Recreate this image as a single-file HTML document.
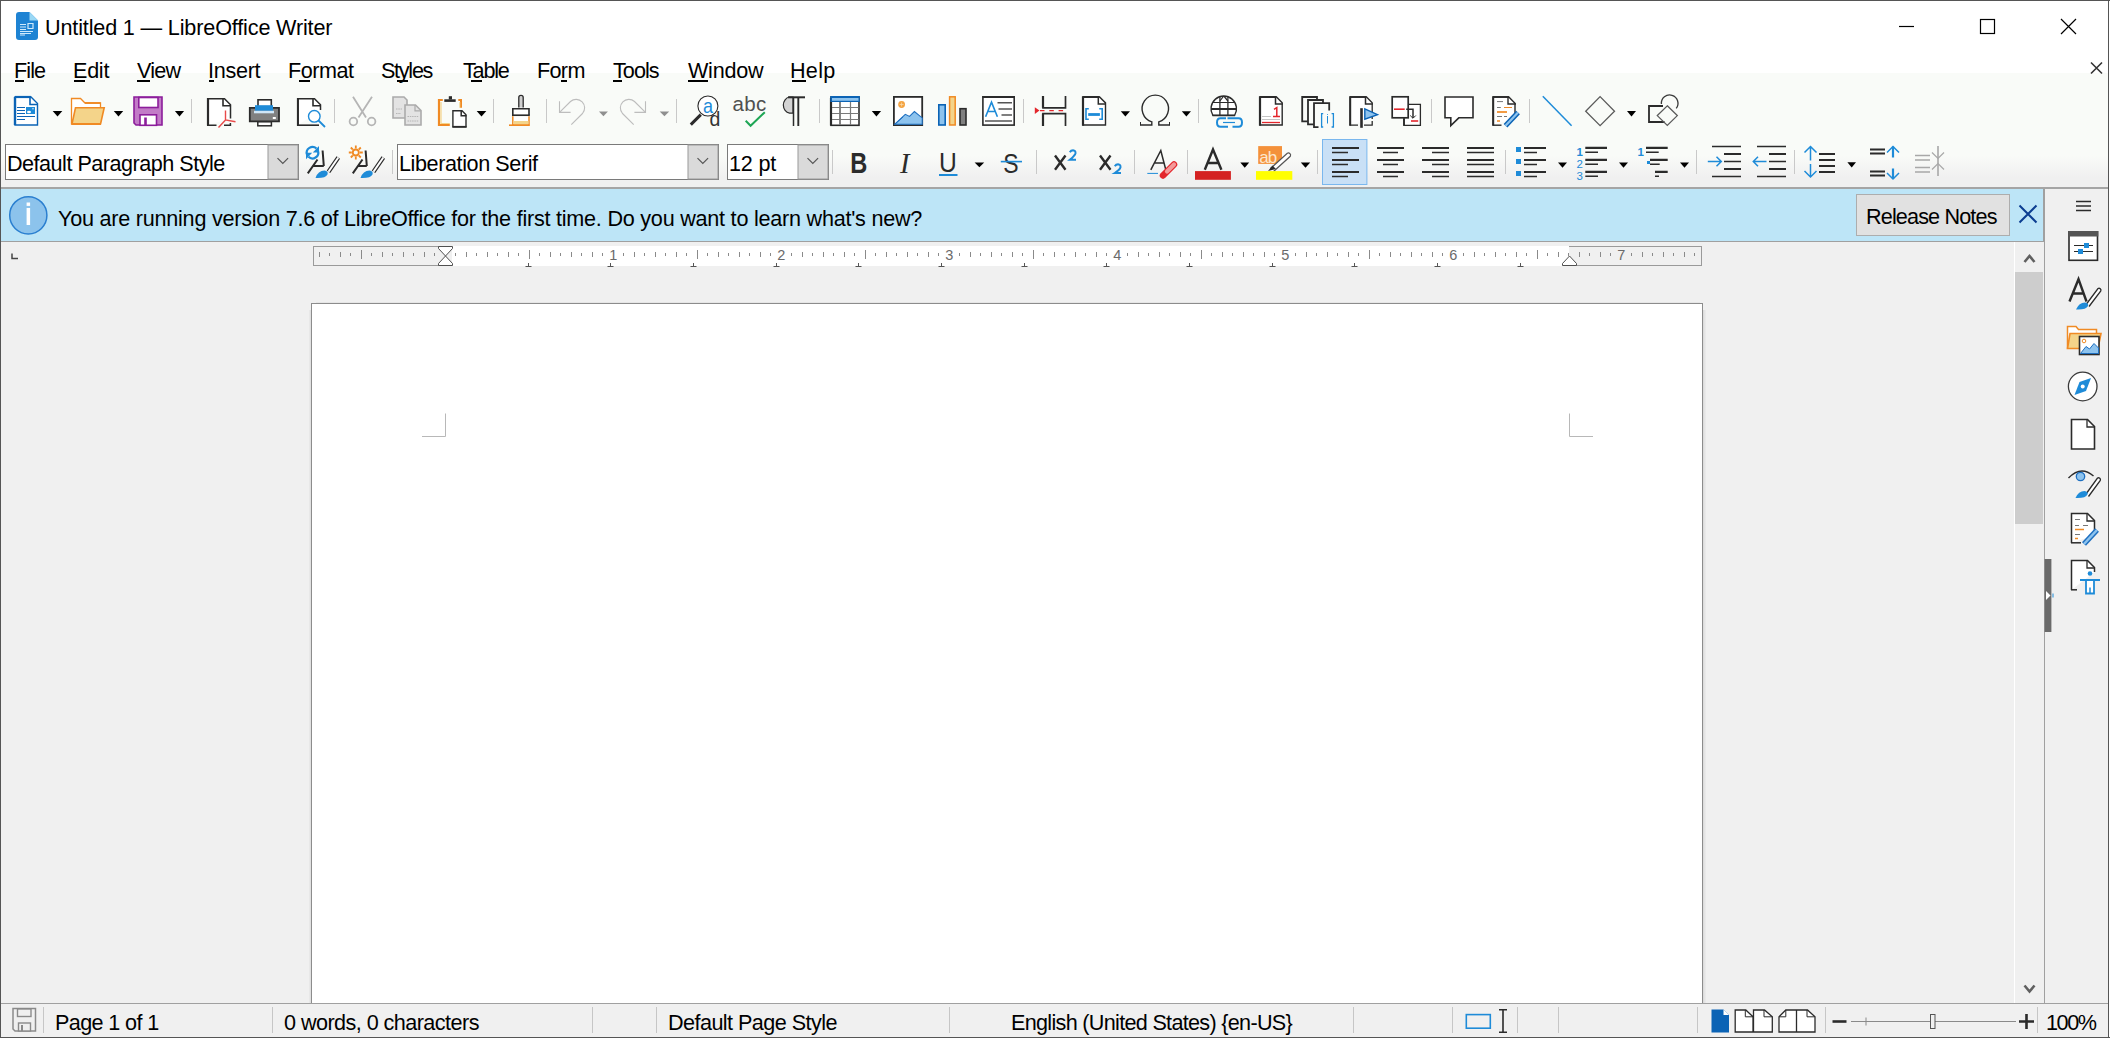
<!DOCTYPE html>
<html><head><meta charset="utf-8">
<style>
html,body{margin:0;padding:0;width:2110px;height:1038px;overflow:hidden;background:#fff}
#root{position:relative;width:2110px;height:1038px;overflow:hidden;font-family:"Liberation Sans",sans-serif;color:#000}
.a{position:absolute}
.t{position:absolute;white-space:nowrap;font-size:21.6px;line-height:1;font-family:"Liberation Sans",sans-serif;color:#000}
.u{text-decoration:underline;text-decoration-thickness:2px;text-underline-offset:3px}
.sep{position:absolute;width:1px;background:#c8c8c8}
svg{position:absolute;overflow:visible}
</style></head><body><div id="root">
<!-- window frame -->
<div class="a" style="left:0;top:0;width:2110px;height:1038px;background:#fff"></div>
<!-- toolbar bg -->
<div class="a" style="left:1px;top:73px;width:2108px;height:114px;background:linear-gradient(#f9fbf8 0,#f9fbf8 83px,#f0f0f0 105px,#f0f0f0 114px)"></div>
<div class="a" style="left:1px;top:187px;width:2108px;height:2px;background:#a5a5a5"></div>
<!-- infobar -->
<div class="a" style="left:1px;top:189px;width:2042px;height:52px;background:#bde5f7"></div>
<div class="a" style="left:2043px;top:189px;width:1px;height:53px;background:#a0a0a0"></div>
<div class="a" style="left:1px;top:241px;width:2043px;height:1px;background:#a0a0a0"></div>
<!-- workspace -->
<div class="a" style="left:1px;top:242px;width:2013px;height:761px;background:#f0f0f0"></div>
<!-- sidebar -->
<div class="a" style="left:2044px;top:189px;width:1px;height:814px;background:#a0a0a0"></div>
<div class="a" style="left:2045px;top:189px;width:64px;height:814px;background:#f0f0f0"></div>
<!-- scrollbar -->
<div class="a" style="left:2014px;top:242px;width:1px;height:761px;background:#fff"></div>
<div class="a" style="left:2015px;top:242px;width:29px;height:761px;background:#f0f0f0"></div>
<div class="a" style="left:2015px;top:272px;width:28px;height:252px;background:#cdcdcd"></div>
<!-- statusbar -->
<div class="a" style="left:1px;top:1003px;width:2108px;height:1px;background:#a0a0a0"></div>
<div class="a" style="left:1px;top:1004px;width:2108px;height:33px;background:#f0f0f0"></div>
<!-- page shadow -->
<div class="a" style="left:309px;top:310px;width:2px;height:693px;background:linear-gradient(90deg,#ececec,#dcdcdc)"></div>
<div class="a" style="left:1703px;top:310px;width:3px;height:693px;background:linear-gradient(90deg,#d8d8d8,#e4e4e4,#ececec)"></div>
<div class="a" style="left:316px;top:302px;width:1384px;height:1px;background:#e6e6e6"></div>
<!-- page -->
<div class="a" style="left:311px;top:303px;width:1390px;height:699px;background:#fff;border-left:1px solid #8c8c8c;border-top:1px solid #8c8c8c;border-right:1px solid #8c8c8c"></div>
<!-- borders -->
<div class="a" style="left:0;top:0;width:2110px;height:1px;background:#555"></div>
<div class="a" style="left:0;top:0;width:1px;height:1038px;background:#555"></div>
<div class="a" style="left:2108px;top:0;width:1px;height:1038px;background:#555"></div>
<div class="a" style="left:0;top:1037px;width:2110px;height:1px;background:#555"></div>

<!-- title -->
<div class="t" style="left:45px;top:17px;letter-spacing:-0.15px">Untitled 1 — LibreOffice Writer</div>
<!-- menu -->
<div class="t" style="left:14px;top:60px;letter-spacing:-0.93px">File</div>
<div class="t" style="left:73px;top:60px;letter-spacing:-0.27px">Edit</div>
<div class="t" style="left:137px;top:60px;letter-spacing:-0.77px">View</div>
<div class="t" style="left:208px;top:60px;letter-spacing:-0.28px">Insert</div>
<div class="t" style="left:288px;top:60px;letter-spacing:-0.48px">Format</div>
<div class="t" style="left:381px;top:60px;letter-spacing:-1.28px">Styles</div>
<div class="t" style="left:463px;top:60px;letter-spacing:-1.2px">Table</div>
<div class="t" style="left:537px;top:60px;letter-spacing:-0.67px">Form</div>
<div class="t" style="left:613px;top:60px;letter-spacing:-0.95px">Tools</div>
<div class="t" style="left:688px;top:60px;letter-spacing:-0.26px">Window</div>
<div class="t" style="left:790px;top:60px;letter-spacing:0.27px">Help</div>

<!-- combos -->


<!-- infobar text -->
<div class="t" style="left:58px;top:208px;letter-spacing:-0.234px">You are running version 7.6 of LibreOffice for the first time. Do you want to learn what's new?</div>
<div class="a" style="left:1856px;top:194px;width:152px;height:40px;background:#e1e1e1;border:1px solid #adadad"></div>
<div class="t" style="left:1866px;top:206px;letter-spacing:-0.85px">Release Notes</div>

<!-- status -->
<div class="t" style="left:55px;top:1012px;letter-spacing:-0.62px">Page 1 of 1</div>
<div class="t" style="left:284px;top:1012px;letter-spacing:-0.55px">0 words, 0 characters</div>
<div class="t" style="left:668px;top:1012px;letter-spacing:-0.55px">Default Page Style</div>
<div class="t" style="left:1011px;top:1012px;letter-spacing:-0.69px">English (United States) {en-US}</div>
<div class="t" style="left:2046px;top:1012px;letter-spacing:-1.4px">100%</div>


<svg id="ic1" width="2110" height="1038" style="left:0;top:0" viewBox="0 0 2110 1038" fill="none" stroke-linecap="butt">
<!-- app icon -->
<g>
<path d="M19,12 H29.5 L38,20.5 V37 Q38,40 35,40 H19 Q16,40 16,37 V15 Q16,12 19,12 Z" fill="#1e83d3"/>
<path d="M29.5,12 L38,20.5 H29.5 Z" fill="#9ad8f5"/>
<path d="M20,24.5h6M20,27h6M20,29.5h6M20,31.5h13M20,33.5h11M20,35h5" stroke="#cfeafc" stroke-width="1.2"/>
<path d="M28,23.5h5v5h-5z" stroke="#cfeafc" stroke-width="1.2"/>
</g>
<!-- window controls -->
<path d="M1899,26.5h15" stroke="#000" stroke-width="1.2"/>
<rect x="1980.5" y="19.5" width="14" height="14" stroke="#000" stroke-width="1.2"/>
<path d="M2061,19L2076,34M2076,19L2061,34" stroke="#000" stroke-width="1.2"/>
<!-- doc close -->
<path d="M2091,62.5L2102,73.5M2102,62.5L2091,73.5" stroke="#333" stroke-width="1.6"/>

<!-- ===== toolbar 1 ===== -->
<!-- new -->
<path d="M15,125 V97 H31 L37.5,103.5 V125 Z" fill="#fff" stroke="#0b63b5" stroke-width="1.4"/>
<path d="M15,97v28" stroke="#0b63b5" stroke-width="2.4"/>
<path d="M15,97h16" stroke="#0b63b5" stroke-width="2.2"/>
<path d="M30,97 V104.5 H38" stroke="#0b63b5" stroke-width="1.6"/>
<path d="M17,107.5h8M17,110.5h8M17,113.5h8M17,116.5h18M17,119.5h8" stroke="#0b63b5" stroke-width="1.1"/>
<rect x="26" y="107" width="9" height="7" fill="#1e8bd8"/>
<ellipse cx="29" cy="112" rx="2" ry="1.2" fill="#fff"/>
<circle cx="33" cy="108.8" r="0.8" fill="#cfe6f7"/>
<!-- dropdown arrows -->
<g fill="#000">
<path d="M52.7,111h9.6l-4.8,5.4z"/>
<path d="M113.8,111h9.4l-4.7,5.4z"/>
<path d="M174.9,111h9.2l-4.6,5.4z"/>
<path d="M476.7,111h9.6l-4.8,5.4z"/>
<path d="M871.8,111h9.3l-4.65,5.4z"/>
<path d="M1120.8,111.3h9.2l-4.6,5.2z"/>
<path d="M1181.8,111.3h9.2l-4.6,5.2z"/>
<path d="M1627,111.1h9l-4.5,5.4z"/>
</g>
<g fill="#8f8f8f">
<path d="M599,111.4h8.9l-4.45,4.9z"/>
<path d="M659.7,111.4h9.5l-4.75,4.9z"/>
</g>
<!-- open folder -->
<path d="M71.5,124.5 V98.5 H80.5 L85,103 H100.5 V107.5" stroke="#f08a24" stroke-width="1.3" fill="#fff"/>
<path d="M85,103h15.5" stroke="#f08a24" stroke-width="1.8"/>
<path d="M75.5,107.8 H104.2 L100.6,123.8 H72 Z" fill="#f4d48a" stroke="#f08a24" stroke-width="1.6"/>
<path d="M71.5,124h29.5" stroke="#f08a24" stroke-width="2"/>
<!-- save -->
<path d="M134,97 H162 V125 H136 L134,123 Z" fill="#c27bc7" stroke="#8c1d9b" stroke-width="1.6"/>
<rect x="138.8" y="97.5" width="19.2" height="10" fill="#fff" stroke="#8c1d9b" stroke-width="1.6"/>
<rect x="140" y="114.8" width="16.5" height="10.5" fill="#fff" stroke="#8c1d9b" stroke-width="1.6"/>
<path d="M145.5,117.5v8" stroke="#8c1d9b" stroke-width="2.6"/>
<!-- separators -->
<g stroke="#c9c9c9" stroke-width="1">
<path d="M191.5,99v24M334.5,99v24M493.5,99v24M546.5,99v24M676.5,99v24M819.5,99v24M1023.5,99v24M1198.5,99v24M1431.5,99v24M1529.5,99v24"/>
</g>
<!-- export pdf -->
<path d="M208,125 V98.8 H224.5 L230.5,104.8 V118.5" stroke="#2b2b2b" stroke-width="1.5" fill="#fff"/>
<path d="M208,98v27.5" stroke="#2b2b2b" stroke-width="2.2"/>
<path d="M223,98.5 V105.8 H231" stroke="#2b2b2b" stroke-width="1.6"/>
<path d="M207,125.2h9.5M224,125.2h7.2M230.4,123v2.8" stroke="#2b2b2b" stroke-width="1.5"/>
<path d="M225.5,110.5 V120 L235.5,121.8 M225.5,120 L218.5,127.5" stroke="#e84a4a" stroke-width="1.4"/>
<!-- print -->
<rect x="258" y="99.8" width="13.3" height="8.5" fill="#fff" stroke="#2b2b2b" stroke-width="1.6"/>
<path d="M249.8,107.8 H279 V121.4 H249.8 Z" fill="#808080" stroke="#2b2b2b" stroke-width="1.8"/>
<rect x="255" y="105.2" width="18" height="5.6" fill="#1e8bd8"/>
<rect x="254" y="110.8" width="20" height="2.5" fill="#cfe6f7"/>
<rect x="272.8" y="117" width="3" height="2" fill="#fff"/>
<rect x="257.8" y="121.8" width="13.6" height="4" fill="#fff" stroke="#2b2b2b" stroke-width="1.5"/>
<!-- print preview -->
<path d="M298,125.2 V98.8 H314.5 L320.5,104.8 V110" stroke="#2b2b2b" stroke-width="1.5" fill="#fff"/>
<path d="M297.9,98v27.8" stroke="#2b2b2b" stroke-width="2"/>
<path d="M313,98.5 V105.8 H321" stroke="#2b2b2b" stroke-width="1.6"/>
<path d="M297,125.2h22" stroke="#2b2b2b" stroke-width="1.6"/>
<circle cx="314.3" cy="116.3" r="5.8" fill="#fff" stroke="#1e8bd8" stroke-width="1.4"/>
<path d="M318.5,120.5L325,127" stroke="#1e8bd8" stroke-width="1.8"/>
<!-- cut (disabled) -->
<g stroke="#b5b5b5" stroke-width="1.8">
<path d="M353,96.8L366,117.6M372,96.8L358.5,117.6"/>
<circle cx="353.4" cy="121.5" r="3.8"/>
<circle cx="371.6" cy="121.5" r="3.8"/>
</g>
<!-- copy (disabled) -->
<path d="M393,118 V97 H404 L407,100 V118 Z" fill="#e3e3e3" stroke="#ababab" stroke-width="1.6"/>
<path d="M405,125 V105 H415.5 L421,110.5 V125 Z" fill="#e3e3e3" stroke="#ababab" stroke-width="1.6"/>
<path d="M415,105 V110.8 H421" stroke="#ababab" stroke-width="1.2"/>
<path d="M396,109h6M396,113.5h5M407.5,116.5h11M407.5,121h11" stroke="#b0b0b0" stroke-width="0.9" stroke-dasharray="1.5 0.8"/>
<!-- paste -->
<path d="M442.8,100 H439 V125 H449.8" stroke="#f08a24" stroke-width="2.2"/>
<path d="M441,102v21.5h8.8" stroke="#f4d48a" stroke-width="1.2"/>
<path d="M458.3,100 H461 V107.8" stroke="#f08a24" stroke-width="2"/>
<path d="M459.8,102v5.8" stroke="#f4d48a" stroke-width="1"/>
<rect x="444.3" y="99.3" width="11.4" height="2.6" fill="#2b2b2b"/>
<rect x="448.8" y="96.2" width="3.2" height="3.3" fill="#2b2b2b"/>
<path d="M452.9,126.9 V110.8 H462 L466,114.8 V126.9 Z" fill="#fff" stroke="#2b2b2b" stroke-width="1.4"/>
<path d="M461.2,110.8 V115.8 H466.5" stroke="#2b2b2b" stroke-width="1.5"/>
<path d="M452.5,126.8h14" stroke="#2b2b2b" stroke-width="1.8"/>
<!-- clone formatting -->
<path d="M518.8,107.4 V97.5 Q518.8,95.4 521,95.4 Q523.2,95.4 523.2,97.5 V107.4" fill="#cfcfcf" stroke="#2b2b2b" stroke-width="1.3"/>
<path d="M512.8,115.4 V108.8 H529 V115.4" fill="#fff" stroke="#2b2b2b" stroke-width="1.6"/>
<rect x="512" y="114.4" width="17.7" height="1.8" fill="#2b2b2b"/>
<path d="M512.8,116.2 V125.1 H529 V116.2" fill="#fff" stroke="#f08a24" stroke-width="1.5"/>
<rect x="513.5" y="121" width="15" height="3.4" fill="#f4d48a"/>
<path d="M509,125.2h20.6" stroke="#f08a24" stroke-width="1.6"/>
<!-- undo / redo (disabled) -->
<g stroke="#bdbdbd" stroke-width="1.1">
<path d="M559.5,101.2V112.4H570.6M560.3,111.6L570.5,101.5A8.5,8.5 0 0 1 582.5,113.5L571.3,124.7"/>
<path d="M645.5,101.2V112.4H634.4M644.7,111.6L634.5,101.5A8.5,8.5 0 0 0 622.5,113.5L633.7,124.7"/>
</g>
<!-- find & replace -->
<circle cx="707.9" cy="106" r="10" fill="#fff" stroke="#2b2b2b" stroke-width="1.1"/>
<path d="M690.8,124.6L700.8,114.6" stroke="#2b2b2b" stroke-width="3"/>
<text x="703" y="113" font-family="Liberation Sans" font-size="20.5" fill="#1e8bd8" transform="translate(703,0) scale(0.88,1) translate(-703,0)">a</text>
<text x="709.4" y="125.8" font-family="Liberation Sans" font-size="20.5" fill="#333" transform="translate(709.4,0) scale(0.95,1) translate(-709.4,0)">d</text>
<!-- spelling -->
<text x="732.5" y="110.6" font-family="Liberation Sans" font-size="20.5" fill="#505050" letter-spacing="0.4">abc</text>
<path d="M745.7,120.8L750.6,125.8L764.8,112.2" stroke="#1ea655" stroke-width="2"/>
<!-- formatting marks -->
<path d="M793,97 H789.5 A7.3,8.2 0 0 0 789.5,113.2 H793 Z" fill="#d3d3d3" stroke="#2b2b2b" stroke-width="1.2"/>
<path d="M788,97.3h17" stroke="#2b2b2b" stroke-width="2"/>
<path d="M793.5,97v29" stroke="#2b2b2b" stroke-width="1.5"/>
<path d="M798.3,97v29" stroke="#2b2b2b" stroke-width="1.9"/>
<!-- table -->
<rect x="831" y="97" width="28" height="28.3" fill="#fff" stroke="#2b2b2b" stroke-width="1.6"/>
<path d="M831,98v27.5" stroke="#2b2b2b" stroke-width="2.2"/>
<rect x="830.3" y="96" width="29.5" height="6" fill="#0b63b5"/>
<rect x="832" y="98" width="26.5" height="2.8" fill="#8dc3ee"/>
<path d="M840,102v23M850.5,102v23M832,107.5h26.5M832,113.5h26.5M832,119.5h26.5" stroke="#7a7a7a" stroke-width="1.2"/>
<path d="M840,102v23" stroke="#7a7a7a" stroke-width="1.6"/>
<!-- image -->
<rect x="893.9" y="96.9" width="28.3" height="28.2" fill="#fff" stroke="#2b2b2b" stroke-width="1.8"/>
<path d="M894.8,124.2 L905.3,114.3 L909.5,116.4 L914.4,111.6 L922.2,117.9 V124.2 Z" fill="#8dc3ee" stroke="#1e6fc0" stroke-width="1.1"/>
<path d="M894.8,124.2 L903,117" stroke="#1e6fc0" stroke-width="1"/>
<circle cx="901.6" cy="104.5" r="3.4" fill="#f4a341"/>
<path d="M899.6,104.5h4M901.6,102.5v4" stroke="#f8d9a8" stroke-width="0.8"/>
<!-- chart -->
<rect x="938.8" y="104.8" width="6.4" height="20.2" fill="#8dc3ee" stroke="#0b63b5" stroke-width="1.6"/>
<rect x="949.6" y="96.8" width="5.6" height="28.2" fill="#f4d48a" stroke="#f08a24" stroke-width="1.5"/>
<rect x="960" y="108.7" width="6" height="16.3" fill="#808080" stroke="#2b2b2b" stroke-width="1.6"/>
<!-- text box -->
<rect x="982.9" y="96.8" width="31.3" height="28.3" fill="#fff" stroke="#2b2b2b" stroke-width="1.6"/>
<path d="M982.5,96.9h32.5" stroke="#2b2b2b" stroke-width="2"/>
<path d="M985.6,116.8L991.5,102.2L997.4,116.8M987.8,111.5h7.4" stroke="#1e8bd8" stroke-width="1.6"/>
<path d="M997.5,102.8h14.5M998.5,109h13.5M1001.5,115h10.5M985,121h27" stroke="#555" stroke-width="1.4"/>
<!-- page break -->
<path d="M1043,96v11.8H1065.5V96M1043,126V113.6H1065.5V126" stroke="#2b2b2b" stroke-width="1.7"/>
<path d="M1043,96v11.8M1043,126V113.6" stroke="#2b2b2b" stroke-width="2.2"/>
<path d="M1040,110.6h26" stroke="#e3262c" stroke-width="1.3" stroke-dasharray="4.5 4.8"/>
<path d="M1034.8,107.2L1039.5,110.6L1034.8,114Z" fill="#e3262c"/>
<!-- field -->
<path d="M1083,125 V97 H1099.6 L1105.5,102.9 V125 Z" fill="#fff" stroke="#2b2b2b" stroke-width="1.4"/>
<path d="M1083,96.3v29.4" stroke="#2b2b2b" stroke-width="2.2"/>
<path d="M1083,97h16.5" stroke="#2b2b2b" stroke-width="2"/>
<path d="M1098.3,97 V104 H1106" stroke="#2b2b2b" stroke-width="1.5"/>
<path d="M1088.8,108.8H1086V119.3H1088.8M1099.2,108.8H1102.2V119.3H1099.2" stroke="#1e8bd8" stroke-width="1.6"/>
<rect x="1088.2" y="113.1" width="11.7" height="2.8" fill="#1e8bd8"/>
<!-- omega -->
<path d="M1140,125H1151.8V121.8A13.2,13.6 0 1 1 1158.8,121.8V125H1170" stroke="#2b2b2b" stroke-width="1.4"/>
<path d="M1140.5,122v3.2M1169.5,122v3.2" stroke="#2b2b2b" stroke-width="1"/>
<!-- hyperlink -->
<clipPath id="globeclip"><path d="M1212.9,115.5 A12.75,12.75 0 1 1 1234.6,115.5 Z"/></clipPath>
<path d="M1212.9,115.5 A12.75,12.75 0 1 1 1234.6,115.5 Z" fill="#fff" stroke="#2b2b2b" stroke-width="1.4"/>
<g clip-path="url(#globeclip)" stroke="#2b2b2b">
<path d="M1219.9,96v20M1227.9,96v20" stroke-width="1.3"/>
<path d="M1210,109h28" stroke-width="2"/>
<path d="M1210,102.5h28" stroke-width="1.1"/>
<path d="M1223.8,96 L1219.9,101 M1223.8,96 L1227.9,101" stroke-width="1.2"/>
</g>
<path d="M1212.6,115.3h22.3" stroke="#2b2b2b" stroke-width="1.4"/>
<path d="M1227.5,118.3 H1238.5 Q1242,118.3 1242,122.5 Q1242,126.8 1238.5,126.8 H1232.5 M1228,126.8 H1220.5 Q1217,126.8 1217,122.5 Q1217,118.3 1220.5,118.3 H1226" stroke="#1e8bd8" stroke-width="2"/>
<path d="M1223,122.5h12" stroke="#1e8bd8" stroke-width="1.2"/>
<!-- footnote -->
<path d="M1260,125 V97 H1276.5 L1282.2,102.7 V125 Z" fill="#fff" stroke="#2b2b2b" stroke-width="1.4"/>
<path d="M1260,96.3v29.4" stroke="#2b2b2b" stroke-width="2.2"/>
<path d="M1260,97h16.5" stroke="#2b2b2b" stroke-width="2"/>
<path d="M1275.5,97 V104 H1283" stroke="#2b2b2b" stroke-width="1.5"/>
<path d="M1274,109.3L1276.8,107.6V116.5M1273,116.5h7" stroke="#e3262c" stroke-width="1.5"/>
<path d="M1262,116.5h9M1262,119.5h18" stroke="#c4c4c4" stroke-width="1.1"/>
<path d="M1262,122.5h18" stroke="#e3262c" stroke-width="1.3"/>
<!-- index / toc -->
<path d="M1307.8,121.3 H1302.2 V97 H1317 V99.5" stroke="#2b2b2b" stroke-width="1.8"/>
<path d="M1313.8,124.4 H1308 V100 H1323 V103" stroke="#2b2b2b" stroke-width="1.8"/>
<path d="M1318.5,127.2 H1314 V103.2 H1329.2 V110.5" stroke="#2b2b2b" stroke-width="1.8"/>
<path d="M1323.2,113.6H1321.6V127H1323.2M1331.6,113.6H1333.4V127H1331.6" stroke="#1e8bd8" stroke-width="1.3"/>
<path d="M1327.5,116v7.5M1327.5,114v0.8" stroke="#1e8bd8" stroke-width="1"/>
<!-- bookmark -->
<path d="M1350.2,125 V97 H1366.5 L1372.2,102.7 V119" stroke="#2b2b2b" stroke-width="1.3" fill="#fff"/>
<path d="M1350.2,96.3v29.4" stroke="#2b2b2b" stroke-width="2"/>
<path d="M1350,97h16.5" stroke="#2b2b2b" stroke-width="1.8"/>
<path d="M1365.5,97 V104 H1373" stroke="#2b2b2b" stroke-width="1.5"/>
<path d="M1349.5,125.2h8.5M1364,125.2h8.8M1372.2,121v4.2" stroke="#2b2b2b" stroke-width="1.3"/>
<path d="M1361.5,108.2v19.6" stroke="#2b2b2b" stroke-width="2.6"/>
<path d="M1364.8,108.8 L1377.5,114.6 L1364.8,119.2 Z" fill="#8dc3ee" stroke="#0b63b5" stroke-width="1.4"/>
<!-- cross reference -->
<path d="M1404,104.3 H1420.4 V125.3 H1404 V118.3" fill="#fff" stroke="#2b2b2b" stroke-width="1.3"/>
<rect x="1392.2" y="96.8" width="16" height="21" fill="#fff" stroke="#2b2b2b" stroke-width="1.7"/>
<path d="M1404,118.3v7.5" stroke="#2b2b2b" stroke-width="1.8"/>
<path d="M1394,109.2h10.7" stroke="#e3262c" stroke-width="1.6"/>
<path d="M1406.2,109.2H1413V118" stroke="#2b2b2b" stroke-width="1.5"/>
<path d="M1410.2,115.5L1413,118.3L1415.8,115.5" stroke="#2b2b2b" stroke-width="1"/>
<path d="M1411,121h7.2" stroke="#e3262c" stroke-width="1.6"/>
<!-- comment -->
<path d="M1445,97 H1473 V117.8 H1458.8 L1450.8,125.5 V117.8 H1445 Z" fill="#fff" stroke="#2b2b2b" stroke-width="1.6"/>
<!-- track changes -->
<path d="M1493.2,125 V97 H1508.8 L1515,103.2 V118" fill="#fff" stroke="#2b2b2b" stroke-width="1.4"/>
<path d="M1493.2,96.3v29.4" stroke="#2b2b2b" stroke-width="2"/>
<path d="M1493,97h16" stroke="#2b2b2b" stroke-width="1.8"/>
<path d="M1508,97 V104 H1516" stroke="#2b2b2b" stroke-width="1.4"/>
<path d="M1492.5,125.2h9" stroke="#2b2b2b" stroke-width="1.4"/>
<path d="M1497,101.6h6M1497,107.5h3.8M1497,116.5h5M1504,116.5h3" stroke="#777" stroke-width="1"/>
<path d="M1504,107.5h8" stroke="#f08a24" stroke-width="1"/>
<path d="M1497,112h10" stroke="#f08a24" stroke-width="1.7"/>
<path d="M1497,121h3" stroke="#f08a24" stroke-width="1.5"/>
<path d="M1505.5,125.8 L1518,112.5" stroke="#0b63b5" stroke-width="5.2"/>
<path d="M1505.5,125.8 L1518,112.5" stroke="#8dc3ee" stroke-width="2.2"/>
<!-- line -->
<path d="M1542.8,96.3L1571.6,125.8" stroke="#1e8bd8" stroke-width="1.5"/>
<!-- diamond -->
<path d="M1600.1,96.6L1614.5,111.2L1600.1,125.6L1585.7,111.2Z" stroke="#5a5a5a" stroke-width="1.3"/>
<!-- draw shapes -->
<path d="M1663,106 H1649 V122 H1664.5" stroke="#2b2b2b" stroke-width="1.8"/>
<path d="M1661.4,104 A8.3,8.3 0 1 1 1676.2,108.4" stroke="#3a3a3a" stroke-width="1.3"/>
<path d="M1667.3,105.8L1677.3,115.6L1667.3,125.4L1657.3,115.6Z" stroke="#5a5a5a" stroke-width="1.3"/>
</svg>


<!-- ===== toolbar 2 ===== -->
<svg id="ic2" width="2110" height="1038" style="left:0;top:0" viewBox="0 0 2110 1038" fill="none">
<!-- combos -->
<rect x="5.5" y="144.5" width="293" height="35" fill="#fff" stroke="#7a7a7a" stroke-width="1"/>
<rect x="268" y="145" width="30" height="34" fill="#dadada" stroke="#9a9a9a" stroke-width="1"/>
<rect x="397.5" y="144.5" width="321" height="35" fill="#fff" stroke="#7a7a7a" stroke-width="1"/>
<rect x="688" y="145" width="30" height="34" fill="#dadada" stroke="#9a9a9a" stroke-width="1"/>
<rect x="727.5" y="144.5" width="101" height="35" fill="#fff" stroke="#7a7a7a" stroke-width="1"/>
<rect x="798" y="145" width="30" height="34" fill="#dadada" stroke="#9a9a9a" stroke-width="1"/>
<g stroke="#555" stroke-width="1.2">
<path d="M277.5,158.2L282.8,163.5L288.1,158.2"/>
<path d="M697.5,158.2L702.8,163.5L708.1,158.2"/>
<path d="M807.5,158.2L812.8,163.5L818.1,158.2"/>
</g>
<!-- separators -->
<g stroke="#c9c9c9" stroke-width="1">
<path d="M392.5,150v24M832.5,150v24M1036.5,150v24M1134.5,150v24M1187.5,150v24M1317.5,150v24M1505.5,150v24M1696.5,150v24M1794.5,150v24"/>
</g>
<!-- update style -->
<path d="M307,154.5 A5.8,5.8 0 0 1 316.5,148.5" stroke="#1e8bd8" stroke-width="2.2"/>
<path d="M319,146L319,152.5L312.8,152.5Z" fill="#1e8bd8"/>
<path d="M318,150.8 A5.8,5.8 0 0 1 308.5,156.8" stroke="#1e8bd8" stroke-width="2.2"/>
<path d="M306,159.2L306,152.8L312.2,152.8Z" fill="#1e8bd8"/>
<path d="M307.8,173.4L317.5,159.5M322.6,150.5L323.8,166M312.8,166H323.8" stroke="#2b2b2b" stroke-width="2"/>
<path d="M328.5,171.8L338.3,157.5" stroke="#2b2b2b" stroke-width="4.2"/>
<path d="M328.5,171.8L338.3,157.5" stroke="#fff" stroke-width="2"/>
<path d="M315.5,178 Q318,170.5 324.5,170.5 Q328.5,171 327.5,174.5 Q325.5,178.5 315.5,178 Z" fill="#1e8bd8"/>
<!-- new style -->
<g stroke="#f08a24" stroke-width="1.8">
<circle cx="355.8" cy="152.5" r="3"/>
<path d="M355.8,145.5v3M355.8,156.5v3M348.8,152.5h3M359.8,152.5h3M350.8,147.5l2,2M358.8,155.5l2,2M360.8,147.5l-2,2M352.8,155.5l-2,2"/>
</g>
<path d="M352.8,173.4L362.5,159.5M365.6,150.5L366.8,166M357.8,166H366.8" stroke="#2b2b2b" stroke-width="2"/>
<path d="M373.5,171.8L383.3,157.5" stroke="#2b2b2b" stroke-width="4.2"/>
<path d="M373.5,171.8L383.3,157.5" stroke="#fff" stroke-width="2"/>
<path d="M360.5,178 Q363,170.5 369.5,170.5 Q373.5,171 372.5,174.5 Q370.5,178.5 360.5,178 Z" fill="#1e8bd8"/>
<!-- B I U S -->
<text x="850" y="172.6" font-family="Liberation Sans" font-weight="bold" font-size="29.5" fill="#2b2b2b" transform="translate(851,0) scale(0.8,1) translate(-851,0)">B</text>
<text x="900" y="172.8" font-family="Liberation Serif" font-style="italic" font-size="28.5" fill="#2b2b2b">I</text>
<text x="939" y="172.5" font-family="Liberation Sans" font-size="28" fill="#2b2b2b" transform="translate(940,0) scale(0.88,1) translate(-940,0)">U</text>
<path d="M939,175h18.5" stroke="#1e8bd8" stroke-width="2"/>
<text x="1003" y="172.6" font-family="Liberation Sans" font-size="28" fill="#2b2b2b" transform="translate(1004,0) scale(0.82,1) translate(-1004,0)">S</text>
<path d="M1000.8,161.6h21.2" stroke="#1e8bd8" stroke-width="1.6"/>
<g fill="#000">
<path d="M974.6,162.4h9.6l-4.8,4.9z"/>
<path d="M1240.3,162.4h8.9l-4.45,5.3z"/>
<path d="M1300.8,162.4h9.4l-4.7,5.3z"/>
<path d="M1558,162.4h9l-4.5,5.3z"/>
<path d="M1619,162.4h9l-4.5,5.3z"/>
<path d="M1680,162.4h9l-4.5,5.3z"/>
<path d="M1847.4,162.3h8.6l-4.3,5.1z"/>
</g>
<!-- super / sub -->
<path d="M1055,155.5L1065.5,169.8M1065.5,155.5L1055,169.8" stroke="#2b2b2b" stroke-width="2.4"/>
<path d="M1069.8,152.2 Q1071,150.2 1073,150.2 Q1075.8,150.5 1075.5,153.2 Q1075,155.5 1069.8,159.8 H1076" stroke="#1e8bd8" stroke-width="2"/>
<path d="M1100,155.5L1110.5,169.8M1110.5,155.5L1100,169.8" stroke="#2b2b2b" stroke-width="2.4"/>
<path d="M1114.8,166.3 Q1116,164.3 1118,164.3 Q1120.8,164.6 1120.5,167.3 Q1120,169.6 1114.8,173 H1121" stroke="#1e8bd8" stroke-width="2"/>
<!-- clear formatting -->
<path d="M1150.8,169.8L1160.8,150.5L1165.8,169.8M1154.5,163h10" stroke="#2b2b2b" stroke-width="1.5"/>
<path d="M1147.3,173.4h10.7" stroke="#1e8bd8" stroke-width="1"/>
<path d="M1163,175.5L1174,164.5" stroke="#e3262c" stroke-width="6.5" stroke-linecap="round"/>
<path d="M1167,171.5L1174,164.5" stroke="#f39a9a" stroke-width="4.2" stroke-linecap="round"/>
<!-- font color -->
<path d="M1204.8,169.8L1213,149.5L1221.4,169.8M1208,163h10" stroke="#2b2b2b" stroke-width="2.4"/>
<rect x="1195" y="171.1" width="35.9" height="8.7" fill="#d42222"/>
<!-- highlighting -->
<rect x="1258.2" y="146.1" width="23.8" height="17.8" fill="#f4913a"/>
<text x="1259.2" y="162.5" font-family="Liberation Sans" font-size="17" fill="#fde6cc" letter-spacing="-1">ab</text>
<path d="M1270.5,168.5L1287.3,153.3A2.2,2.2 0 0 1 1290.3,156.3L1273.5,171.5" fill="#fff" stroke="#555" stroke-width="1.2"/>
<path d="M1268,171L1272.5,165.5L1276,169Z" fill="#2b2b2b"/>
<rect x="1256" y="171.1" width="36.3" height="8.7" fill="#ffff00"/>
<!-- align left (active) -->
<rect x="1322.5" y="139.5" width="44.4" height="45" fill="#c9e0f6" stroke="#7ab7ee" stroke-width="1"/>
<g stroke="#2b2b2b">
<path d="M1332,148h27M1332,160h27M1332,172h27" stroke-width="2.2"/>
<path d="M1332,152.5h16M1332,164.5h16M1332,176.5h16" stroke-width="1.4"/>
<!-- center -->
<path d="M1377,148h27M1377,160h27M1377,172h27" stroke-width="2.2"/>
<path d="M1383,152.5h15M1383,164.5h15M1383,176.5h15" stroke-width="1.4"/>
<!-- right -->
<path d="M1422,148h27M1422,160h27M1422,172h27" stroke-width="2.2"/>
<path d="M1432,152.5h17M1432,164.5h17M1432,176.5h17" stroke-width="1.4"/>
<!-- justify -->
<path d="M1467,148h27M1467,160h27M1467,172h27" stroke-width="2.2"/>
<path d="M1467,152.5h27M1467,164.5h27M1467,176.5h27" stroke-width="1.4"/>
<!-- bullets -->
<path d="M1524,148h22M1524,160h22M1524,172h22" stroke-width="2.2"/>
<path d="M1524,152.5h13M1524,164.5h13M1524,176.5h13" stroke-width="1.4"/>
<!-- numbering -->
<path d="M1585.3,147.8h21.7M1585.3,159.8h21.7M1585.3,171.8h21.7" stroke-width="2.2"/>
<path d="M1585.3,152.3h12.7M1585.3,164.3h12.7M1585.3,176.3h12.7" stroke-width="1.4"/>
<!-- outline -->
<path d="M1646,147.8h21.7M1650,159.8h17.7M1655,171.8h12.7" stroke-width="2.2"/>
<path d="M1646,152.3h12.7M1650,164.3h9.7M1655,176.3h4" stroke-width="1.4"/>
</g>
<g fill="#1e8bd8">
<path d="M1516,147h5v5h-5zM1516,159h5v5h-5zM1516,171h5v5h-5z"/>
<path d="M1647,161h3v3h-3z"/>
</g>
<text x="1576.5" y="156" font-family="Liberation Sans" font-size="11.5" font-weight="bold" fill="#1e8bd8">1</text>
<text x="1576.5" y="168" font-family="Liberation Sans" font-size="11.5" fill="#1e8bd8">2</text>
<text x="1576.5" y="180" font-family="Liberation Sans" font-size="11.5" fill="#1e8bd8">3</text>
<text x="1637.5" y="156" font-family="Liberation Sans" font-size="11.5" font-weight="bold" fill="#1e8bd8">1</text>
<!-- indent -->
<g stroke="#2b2b2b">
<path d="M1712,146.5h29M1712,176.5h29M1757,146.5h29M1757,176.5h29" stroke-width="1.5"/>
<path d="M1724,154h17M1724,169h17M1769,154h17M1769,169h17" stroke-width="2.2"/>
<path d="M1724,161.5h17M1769,161.5h17" stroke-width="1.5"/>
<!-- line spacing lines -->
<path d="M1819,154h16M1819,160h16M1819,166h16M1819,172h16" stroke-width="2.2"/>
<path d="M1870,149.5h15M1870,153.5h15M1870,171.5h15M1870,175.5h15" stroke-width="2"/>
</g>
<g stroke="#1e8bd8" stroke-width="1.5">
<path d="M1707.8,161.5h13.5M1716.5,156.8L1721.3,161.5L1716.5,166.2"/>
<path d="M1766.5,161.5h-13.5M1758,156.8L1753.3,161.5L1758,166.2"/>
<path d="M1810.5,146.5v14M1810.5,164v12.5M1804.5,152.5L1810.5,146.5L1816.5,152.5M1804.5,171L1810.5,177L1816.5,171"/>
</g>
<g stroke="#1e8bd8" stroke-width="2.2">
<path d="M1893,146.5v11M1893,168.5v10.5"/>
</g>
<g stroke="#1e8bd8" stroke-width="1.5">
<path d="M1887,152.5L1893,146.5L1899,152.5M1887,173L1893,179L1899,173"/>
</g>
<g stroke="#a8a8a8" stroke-width="1.6">
<path d="M1915,155.5h15M1915,160h15M1915,167.5h15M1915,172h15"/>
<path d="M1938,146v30"/>
<path d="M1932,152.5L1938,158.5L1944,152.5M1932,169.5L1938,163.5L1944,169.5" stroke-width="1.2"/>
</g>
</svg>

<div class="t" style="left:7px;top:153px;letter-spacing:-0.5px">Default Paragraph Style</div>
<div class="t" style="left:399px;top:153px;letter-spacing:-0.41px">Liberation Serif</div>
<div class="t" style="left:729px;top:153px;letter-spacing:-0.2px">12 pt</div>

<!-- ===== infobar / ruler / page / sidebar / status ===== -->
<svg id="ic3" width="2110" height="1038" style="left:0;top:0" viewBox="0 0 2110 1038" fill="none">
<!-- info icon -->
<circle cx="28.3" cy="215.3" r="18.6" fill="#8cc3ec" stroke="#2a7fd0" stroke-width="1.5"/>
<rect x="26.6" y="208" width="3.5" height="17" fill="#fff"/>
<rect x="26.6" y="202.5" width="3.5" height="3.4" fill="#fff"/>
<!-- infobar close -->
<path d="M2019.5,205.5L2036.5,222.5M2036.5,205.5L2019.5,222.5" stroke="#0b3d91" stroke-width="2"/>
<!-- ruler -->
<rect x="313.5" y="246.5" width="1388" height="19" fill="#f0f0f0" stroke="#9a9a9a" stroke-width="1"/>
<rect x="452" y="246" width="1117" height="20" fill="#fff"/>
<g id="ticks" stroke="#8a8a8a" stroke-width="1"><path d="M319.5,252v5M329.5,253v3M340.5,252v5M350.5,253v3M361.5,250v9M371.5,253v3M382.5,252v5M392.5,253v3M403.5,252v5M413.5,253v3M424.5,252v5M434.5,253v3M455.5,253v3M466.5,252v5M476.5,253v3M487.5,252v5M497.5,253v3M508.5,252v5M518.5,253v3M529.5,250v9M539.5,253v3M550.5,252v5M560.5,253v3M571.5,252v5M581.5,253v3M592.5,252v5M602.5,253v3M623.5,253v3M634.5,252v5M644.5,253v3M655.5,252v5M665.5,253v3M676.5,252v5M686.5,253v3M697.5,250v9M707.5,253v3M718.5,252v5M728.5,253v3M739.5,252v5M749.5,253v3M760.5,252v5M770.5,253v3M791.5,253v3M802.5,252v5M812.5,253v3M823.5,252v5M833.5,253v3M844.5,252v5M854.5,253v3M865.5,250v9M875.5,253v3M886.5,252v5M896.5,253v3M907.5,252v5M917.5,253v3M928.5,252v5M938.5,253v3M959.5,253v3M970.5,252v5M980.5,253v3M991.5,252v5M1001.5,253v3M1012.5,252v5M1022.5,253v3M1033.5,250v9M1043.5,253v3M1054.5,252v5M1064.5,253v3M1075.5,252v5M1085.5,253v3M1096.5,252v5M1106.5,253v3M1127.5,253v3M1138.5,252v5M1148.5,253v3M1159.5,252v5M1169.5,253v3M1180.5,252v5M1190.5,253v3M1201.5,250v9M1211.5,253v3M1222.5,252v5M1232.5,253v3M1243.5,252v5M1253.5,253v3M1264.5,252v5M1274.5,253v3M1295.5,253v3M1306.5,252v5M1316.5,253v3M1327.5,252v5M1337.5,253v3M1348.5,252v5M1358.5,253v3M1369.5,250v9M1379.5,253v3M1390.5,252v5M1400.5,253v3M1411.5,252v5M1421.5,253v3M1432.5,252v5M1442.5,253v3M1463.5,253v3M1474.5,252v5M1484.5,253v3M1495.5,252v5M1505.5,253v3M1516.5,252v5M1526.5,253v3M1537.5,250v9M1547.5,253v3M1558.5,252v5M1568.5,253v3M1579.5,252v5M1589.5,253v3M1600.5,252v5M1610.5,253v3M1631.5,253v3M1642.5,252v5M1652.5,253v3M1663.5,252v5M1673.5,253v3M1684.5,252v5M1694.5,253v3"/><path d="M525.5,266.5h6M528.5,263v3M607.5,266.5h6M610.5,263v3M690.5,266.5h6M693.5,263v3M773.5,266.5h6M776.5,263v3M855.5,266.5h6M858.5,263v3M938.5,266.5h6M941.5,263v3M1021.5,266.5h6M1024.5,263v3M1103.5,266.5h6M1106.5,263v3M1186.5,266.5h6M1189.5,263v3M1269.5,266.5h6M1272.5,263v3M1351.5,266.5h6M1354.5,263v3M1434.5,266.5h6M1437.5,263v3M1517.5,266.5h6M1520.5,263v3" stroke="#555"/></g><text x="613.3" y="260" text-anchor="middle" font-family="Liberation Sans" font-size="14.5" fill="#6a6a6a">1</text><text x="781.3" y="260" text-anchor="middle" font-family="Liberation Sans" font-size="14.5" fill="#6a6a6a">2</text><text x="949.3" y="260" text-anchor="middle" font-family="Liberation Sans" font-size="14.5" fill="#6a6a6a">3</text><text x="1117.3" y="260" text-anchor="middle" font-family="Liberation Sans" font-size="14.5" fill="#6a6a6a">4</text><text x="1285.3" y="260" text-anchor="middle" font-family="Liberation Sans" font-size="14.5" fill="#6a6a6a">5</text><text x="1453.3" y="260" text-anchor="middle" font-family="Liberation Sans" font-size="14.5" fill="#6a6a6a">6</text><text x="1621.3" y="260" text-anchor="middle" font-family="Liberation Sans" font-size="14.5" fill="#6a6a6a">7</text>
<!-- indent markers -->
<path d="M438.5,246.5H452.5V248.5L445.5,256L452.5,263.5V265.5H438.5V263.5L445.5,256L438.5,248.5Z" fill="#fff" stroke="#505050" stroke-width="1"/>
<path d="M1562.5,265.5V263.5L1569.5,256L1576.5,263.5V265.5Z" fill="#fff" stroke="#505050" stroke-width="1"/>
<!-- tab corner -->
<path d="M12,253.5v5h6" stroke="#444" stroke-width="1.5"/>
<!-- page corner marks -->
<g stroke="#b8b8b8" stroke-width="1">
<path d="M445.5,413.5V436.5H422"/>
<path d="M1569.5,413.5V436.5H1593"/>
</g>
<!-- scrollbar arrows -->
<path d="M2024.5,262L2029.5,256L2034.5,262" stroke="#606060" stroke-width="2.6"/>
<path d="M2024.5,985.5L2029.5,991.5L2034.5,985.5" stroke="#606060" stroke-width="2.6"/>
<!-- sidebar hamburger -->
<path d="M2076,201.5h15M2076,206h15M2076,210.5h15" stroke="#2b2b2b" stroke-width="1.5"/>
<!-- properties -->
<rect x="2069" y="231.8" width="28.5" height="28.5" fill="#fff" stroke="#2b2b2b" stroke-width="1.6"/>
<rect x="2069" y="231" width="29.3" height="5.5" fill="#555"/>
<path d="M2074,245.5h19M2074,251.5h19" stroke="#2b2b2b" stroke-width="1.2"/>
<rect x="2084" y="243" width="5" height="5" fill="#1e8bd8"/>
<rect x="2078" y="249" width="5" height="5" fill="#1e8bd8"/>
<!-- styles -->
<path d="M2069.5,301.5L2078.5,279.2L2086.5,301.5M2072.8,293.5H2083.5" stroke="#2b2b2b" stroke-width="2.4"/>
<path d="M2086.5,304L2098,288.5A2,2 0 0 1 2100.8,291L2089,306.5" fill="#fff" stroke="#2b2b2b" stroke-width="1.3"/>
<path d="M2076,309.5 Q2079,302.5 2085,302.5 Q2089,303 2088,306 Q2086,310 2076,309.5Z" fill="#1e8bd8"/>
<!-- gallery -->
<path d="M2067.5,348.5V326.5H2076L2078.5,329.5H2096.5V334" fill="#fff" stroke="#f08a24" stroke-width="1.5"/>
<path d="M2070,333.5H2101L2098,348.5H2067.5Z" fill="#f4d48a" stroke="#f08a24" stroke-width="1.6"/>
<rect x="2079.5" y="336.5" width="19.5" height="18" fill="#fff" stroke="#2b2b2b" stroke-width="1.6"/>
<path d="M2080.5,353.5L2086,346.5L2089.5,349L2094,343.5L2098.5,348V353.5Z" fill="#8dc3ee" stroke="#1e6fc0" stroke-width="1"/>
<circle cx="2084" cy="341" r="1.8" stroke="#f08a24" stroke-width="1"/>
<!-- navigator -->
<circle cx="2082.7" cy="386.5" r="14.3" fill="#fff" stroke="#3a3a3a" stroke-width="1.3"/>
<path d="M2091,378L2086,391L2074.5,395L2079.5,382Z" fill="#1e8bd8"/>
<circle cx="2082.7" cy="386.5" r="2" fill="#fff"/>
<!-- page -->
<path d="M2071.5,449V419.5H2087.5L2094.5,426.5V449Z" fill="#fff" stroke="#2b2b2b" stroke-width="1.6"/>
<path d="M2087,419.5V427H2094.5" stroke="#2b2b2b" stroke-width="1.3"/>
<!-- style inspector (eye + brush) -->
<path d="M2068.5,478 Q2081,465 2093.5,476" stroke="#2b2b2b" stroke-width="1.4"/>
<circle cx="2080.5" cy="476.5" r="4.2" fill="#8dc3ee" stroke="#1e6fc0" stroke-width="1.3"/>
<path d="M2086,494L2097.5,478A2,2 0 0 1 2100.3,480.5L2088.5,496.5" fill="#fff" stroke="#2b2b2b" stroke-width="1.3"/>
<path d="M2075.5,498 Q2078.5,491 2084.5,491 Q2088.5,491.5 2087.5,494.5 Q2085.5,498.5 2075.5,498Z" fill="#1e8bd8"/>
<!-- manage changes -->
<path d="M2071.5,543V513.5H2087.5L2094.5,520.5V535" fill="#fff" stroke="#2b2b2b" stroke-width="1.5"/>
<path d="M2087,513.5V521H2094.5" stroke="#2b2b2b" stroke-width="1.3"/>
<path d="M2071,542.8h10" stroke="#2b2b2b" stroke-width="1.5"/>
<path d="M2075,519.5h5M2075,525.5h4M2083,525.5h5M2075,534.5h5" stroke="#777" stroke-width="1"/>
<path d="M2075,529.5h9M2075,538.5h3" stroke="#f08a24" stroke-width="1.6"/>
<path d="M2084,544L2097,530" stroke="#1e6fc0" stroke-width="5.5"/>
<path d="M2084,544L2097,530" stroke="#8dc3ee" stroke-width="2.5"/>
<!-- accessibility -->
<path d="M2071.5,590V560.5H2087.5L2094.5,567.5V572" fill="#fff" stroke="#2b2b2b" stroke-width="1.5"/>
<path d="M2087,560.5V568H2094.5" stroke="#2b2b2b" stroke-width="1.3"/>
<path d="M2071,589.8h6" stroke="#2b2b2b" stroke-width="1.5"/>
<circle cx="2090" cy="573.5" r="2.3" fill="#1e8bd8"/>
<path d="M2080,580h20M2086,580v13.5h8V580" stroke="#1e8bd8" stroke-width="1.8" fill="#fff"/>
<path d="M2090,587.5v6" stroke="#1e8bd8" stroke-width="1.5"/>
<!-- sidebar grip -->
<rect x="2044.6" y="559" width="6.8" height="73" fill="#6a6a6a"/>
<path d="M2046,591L2050.5,595.5L2046,600Z" fill="#fff"/>
<path d="M2053,593.5v4" stroke="#1e8bd8" stroke-width="1"/>
<!-- status: save icon -->
<path d="M13,1008.5H35.5V1031H15L13,1029Z" fill="#f0f0f0" stroke="#8a8a8a" stroke-width="1.5"/>
<rect x="17.5" y="1009" width="13.5" height="7.5" fill="#f0f0f0" stroke="#8a8a8a" stroke-width="1.4"/>
<rect x="18.5" y="1023" width="12" height="8" fill="#f0f0f0" stroke="#8a8a8a" stroke-width="1.4"/>
<path d="M22,1025v6" stroke="#8a8a8a" stroke-width="2"/>
<!-- status separators -->
<g stroke="#c6c6c6" stroke-width="1">
<path d="M43.5,1007v26M272.5,1007v26M592.5,1007v26M656.5,1007v26M949.5,1007v26M1353.5,1007v26M1452.5,1007v26M1517.5,1007v26M1558.5,1007v26M1697.5,1007v26M1825.5,1007v26M2037.5,1007v26"/>
</g>
<!-- selection mode -->
<rect x="1466.3" y="1014.6" width="24" height="13.6" stroke="#1e8bd8" stroke-width="1.6"/>
<path d="M1503,1010v22M1499,1009.8h8M1499,1032.2h8" stroke="#2b2b2b" stroke-width="1.6"/>
<!-- layout icons -->
<path d="M1711.5,1032.5V1009.5H1723.5L1729,1015V1032.5Z" fill="#0b63b5"/>
<path d="M1723.5,1009.5V1015H1729Z" fill="#fff"/>
<path d="M1735.2,1032V1010H1745.8L1753,1016.8V1032Z M1753.5,1032V1010H1764.5L1772.3,1016.8V1032Z" fill="#fff" stroke="#2b2b2b" stroke-width="1.3"/>
<path d="M1745.3,1010V1016.8H1753M1764,1010V1016.8H1772.3" stroke="#2b2b2b" stroke-width="1"/>
<path d="M1779,1032V1016.8L1785.8,1010H1796.5V1032Z M1796.5,1032V1010H1807.5L1815,1016.8V1032Z" fill="#fff" stroke="#2b2b2b" stroke-width="1.3"/>
<path d="M1779,1016.8H1785.8V1010M1807,1010V1016.8H1815" stroke="#2b2b2b" stroke-width="1"/>
<!-- zoom slider -->
<path d="M1832.5,1021.5h14" stroke="#2b2b2b" stroke-width="2.6"/>
<path d="M1851,1021.5h165" stroke="#8a8a8a" stroke-width="1"/>
<path d="M1866,1017.5v8" stroke="#8a8a8a" stroke-width="1"/>
<rect x="1930.5" y="1014.5" width="4.5" height="14" fill="#f0f0f0" stroke="#555" stroke-width="1"/>
<path d="M2019,1021.5h15M2026.5,1014v15" stroke="#2b2b2b" stroke-width="2.6"/>
</svg>

<div class="a" style="left:15.4px;top:80px;width:9.1px;height:2px;background:#000"></div><div class="a" style="left:74.2px;top:80px;width:10.7px;height:2px;background:#000"></div><div class="a" style="left:137.0px;top:80px;width:12.7px;height:2px;background:#000"></div><div class="a" style="left:209.0px;top:80px;width:5.3px;height:2px;background:#000"></div><div class="a" style="left:299.2px;top:80px;width:11.1px;height:2px;background:#000"></div><div class="a" style="left:396.7px;top:80px;width:11.7px;height:2px;background:#000"></div><div class="a" style="left:471.0px;top:80px;width:10.8px;height:2px;background:#000"></div><div class="a" style="left:560.7px;top:80px;width:6.3px;height:2px;background:#000"></div><div class="a" style="left:613.3px;top:80px;width:9.0px;height:2px;background:#000"></div><div class="a" style="left:688.0px;top:80px;width:20.0px;height:2px;background:#000"></div><div class="a" style="left:792.2px;top:80px;width:14.2px;height:2px;background:#000"></div>
</div></body></html>
